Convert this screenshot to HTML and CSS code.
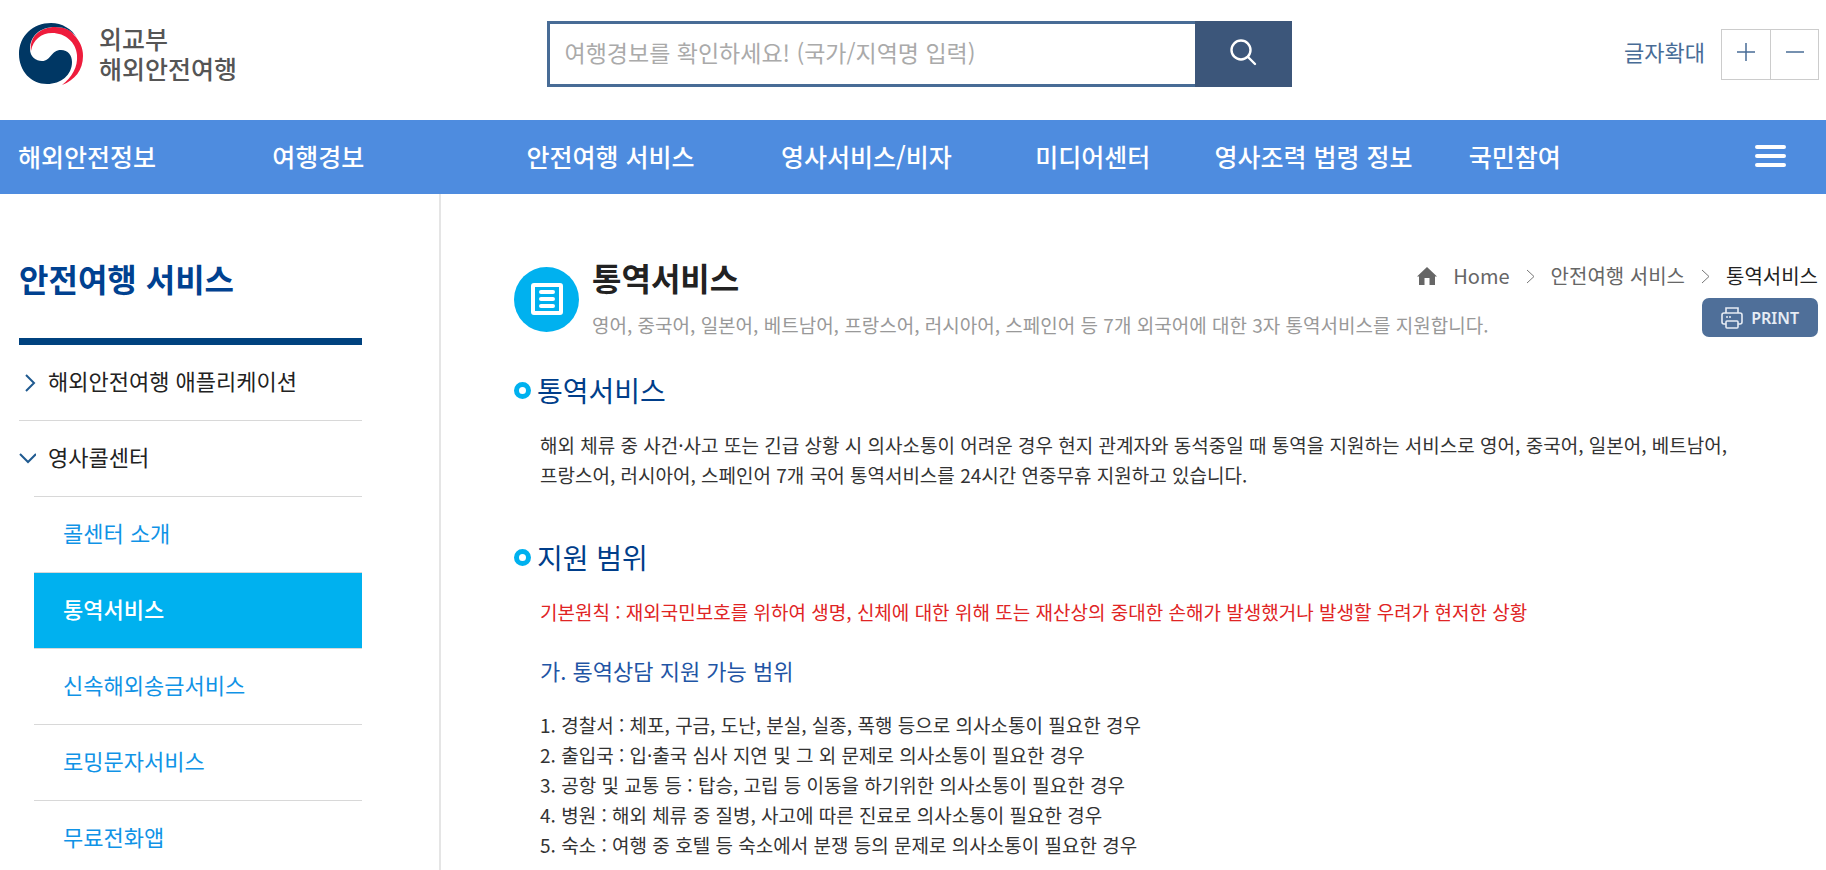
FILE: index.html
```html
<!DOCTYPE html>
<html lang="ko">
<head>
    <meta charset="UTF-8">
    <meta name="viewport" content="width=device-width, initial-scale=1.0">
    <title>통역서비스 | 외교부 해외안전여행</title>
    <link rel="stylesheet" href="styles.css">
</head>
<body>
    <header class="header">
        <a href="#" class="logo">
            <svg class="logo-mark" viewBox="0 0 64 62" aria-hidden="true">
                <path fill="#ee1c3c" d="M12 28C10 13 22 4 36 4C46 4 52 7 55 12C61 18 64 25 64 33C64 47 56 57 43 62C53 54 59 44 58 32C57 19 46 10 33 10C22 10 14 17 12 28Z"/>
                <path fill="#003764" d="M58 15C53 7 45 4 36 4C20 4 11 14 11 26C11 34 17 38 23 38C32 38 32 27 42 27C49 27 53 32 53 39C53 52 42 61 28 61C12 61 0 48 0 31C0 13 14 0 32 0C43 0 53 6 58 15Z"/>
            </svg>
            <span class="logo-text">외교부<br>해외안전여행</span>
        </a>
        <form class="search" action="#">
            <input type="text" class="search-input" aria-label="여행경보 검색" placeholder="여행경보를 확인하세요! (국가/지역명 입력)">
            <button type="submit" class="search-btn" aria-label="검색">
                <svg width="28" height="28" viewBox="0 0 28 28" fill="none" stroke="#fff" stroke-width="2.4" aria-hidden="true">
                    <circle cx="12" cy="12" r="9.5"/>
                    <path d="M19 19l7 7" stroke-linecap="round"/>
                </svg>
            </button>
        </form>
        <div class="font-size">
            <span>글자확대</span>
            <div class="font-btns">
                <button type="button" aria-label="글자 크게">
                    <svg width="18" height="18" viewBox="0 0 18 18" stroke="#486c96" stroke-width="1.5" aria-hidden="true"><path d="M0 9h18M9 0v18"/></svg>
                </button>
                <button type="button" aria-label="글자 작게">
                    <svg width="18" height="18" viewBox="0 0 18 18" stroke="#486c96" stroke-width="1.5" aria-hidden="true"><path d="M0 9h18"/></svg>
                </button>
            </div>
        </div>
    </header>

    <nav class="gnb">
        <ul class="gnb-list">
            <li><a href="#">해외안전정보</a></li>
            <li><a href="#">여행경보</a></li>
            <li><a href="#">안전여행 서비스</a></li>
            <li><a href="#">영사서비스/비자</a></li>
            <li><a href="#">미디어센터</a></li>
            <li><a href="#">영사조력 법령 정보</a></li>
            <li><a href="#">국민참여</a></li>
        </ul>
        <button type="button" class="gnb-all" aria-label="전체메뉴">
            <svg width="31" height="22" viewBox="0 0 31 22" stroke="#fff" stroke-width="4" stroke-linecap="round" aria-hidden="true"><path d="M2 2h27M2 11h27M2 20h27"/></svg>
        </button>
    </nav>

    <div class="container">
        <aside class="side">
            <h2 class="side-title">안전여행 서비스</h2>
            <ul class="lnb">
                <li>
                    <a href="#" class="lnb-link">
                        <svg width="17" height="18" viewBox="0 0 17 18" fill="none" stroke="#1f5a90" stroke-width="2" aria-hidden="true"><path d="M7 1l8 8-8 8"/></svg>
                        <span>해외안전여행 애플리케이션</span>
                    </a>
                </li>
                <li>
                    <a href="#" class="lnb-link">
                        <svg width="17" height="18" viewBox="0 0 17 18" fill="none" stroke="#1f5a90" stroke-width="2" aria-hidden="true"><path d="M1 4l8 8 8-8"/></svg>
                        <span>영사콜센터</span>
                    </a>
                    <ul class="lnb-sub">
                        <li><a href="#">콜센터 소개</a></li>
                        <li><a href="#" class="on">통역서비스</a></li>
                        <li><a href="#">신속해외송금서비스</a></li>
                        <li><a href="#">로밍문자서비스</a></li>
                        <li><a href="#">무료전화앱</a></li>
                    </ul>
                </li>
            </ul>
        </aside>

        <main class="content">
            <div class="page-head">
                <svg class="page-icon" viewBox="0 0 65 65" aria-hidden="true">
                    <circle cx="32.5" cy="32.5" r="32.5" fill="#00b1ef"/>
                    <rect x="19" y="18" width="28" height="28" rx="1" fill="none" stroke="#fff" stroke-width="4"/>
                    <path d="M27 25h12M27 32h12M27 39h12" stroke="#fff" stroke-width="4" stroke-linecap="round"/>
                </svg>
                <div class="page-titles">
                    <h1>통역서비스</h1>
                    <p>영어, 중국어, 일본어, 베트남어, 프랑스어, 러시아어, 스페인어 등 7개 외국어에 대한 3자 통역서비스를 지원합니다.</p>
                </div>
                <div class="page-util">
                    <div class="location">
                        <svg width="20" height="18" viewBox="0 0 20 18" fill="#666" aria-hidden="true"><path d="M10 0L20 9.5H18V18H12.5V11H7.500V18H2V9.500H0Z"/></svg>
                        <a href="#">Home</a>
                        <svg width="9" height="15" viewBox="0 0 9 15" fill="none" stroke="#777" aria-hidden="true"><path d="M1 1l7 6.5-7 6.5"/></svg>
                        <a href="#">안전여행 서비스</a>
                        <svg width="9" height="15" viewBox="0 0 9 15" fill="none" stroke="#777" aria-hidden="true"><path d="M1 1l7 6.5-7 6.5"/></svg>
                        <a href="#" class="current">통역서비스</a>
                    </div>
                    <button type="button" class="print">
                        <svg width="22" height="22" viewBox="0 0 22 22" fill="none" stroke="#e6ecf4" stroke-width="1.6" aria-hidden="true">
                            <path d="M5 6V1h12v5M5 17H3a2 2 0 0 1-2-2V8a2 2 0 0 1 2-2h16a2 2 0 0 1 2 2v7a2 2 0 0 1-2 2h-2"/>
                            <rect x="5" y="14" width="12" height="7" rx="1"/>
                            <path d="M5 10h2M8 10h2"/>
                        </svg>
                        PRINT
                    </button>
                </div>
            </div>

            <section class="section">
                <h3>통역서비스</h3>
                <p>해외 체류 중 사건·사고 또는 긴급 상황 시 의사소통이 어려운 경우 현지 관계자와 동석중일 때 통역을 지원하는 서비스로 영어, 중국어, 일본어, 베트남어, 프랑스어, 러시아어, 스페인어 7개 국어 통역서비스를 24시간 연중무휴 지원하고 있습니다.</p>
            </section>

            <section class="section">
                <h3>지원 범위</h3>
                <p class="notice">기본원칙 : 재외국민보호를 위하여 생명, 신체에 대한 위해 또는 재산상의 중대한 손해가 발생했거나 발생할 우려가 현저한 상황</p>
                <h4>가. 통역상담 지원 가능 범위</h4>
                <ul class="range">
                    <li>1. 경찰서 : 체포, 구금, 도난, 분실, 실종, 폭행 등으로 의사소통이 필요한 경우</li>
                    <li>2. 출입국 : 입·출국 심사 지연 및 그 외 문제로 의사소통이 필요한 경우</li>
                    <li>3. 공항 및 교통 등 : 탑승, 고립 등 이동을 하기위한 의사소통이 필요한 경우</li>
                    <li>4. 병원 : 해외 체류 중 질병, 사고에 따른 진료로 의사소통이 필요한 경우</li>
                    <li>5. 숙소 : 여행 중 호텔 등 숙소에서 분쟁 등의 문제로 의사소통이 필요한 경우</li>
                </ul>
            </section>
        </main>
    </div>
</body>
</html>
```
FILE: styles.css
```css
*,
*::before {
    box-sizing: border-box;
    margin: 0;
    padding: 0;
}

body {
    font-family: "Noto Sans CJK KR", sans-serif;
    font-size: 19px;
    line-height: 30px;
    color: #333;
    background: #fff;
    word-break: keep-all;
}

ul {
    list-style: none;
}

a {
    color: inherit;
    text-decoration: none;
}

button {
    border: 0;
    background: none;
    font-family: inherit;
    cursor: pointer;
}

svg {
    display: block;
    flex-shrink: 0;
}

/* header */
.header {
    display: grid;
    grid-template-columns: 1fr 745px 1fr;
    align-items: start;
    height: 120px;
    padding: 21px 7px 0 19px;
}

.logo {
    display: flex;
    gap: 16px;
    padding-top: 2px;
}

.logo-mark {
    width: 64px;
    height: 62px;
}

.logo-text {
    font-size: 25px;
    font-weight: 500;
    color: #555;
}

.search {
    display: flex;
    height: 66px;
}

.search-input {
    flex: 1;
    min-width: 0;
    padding: 0 15px 4px;
    border: 3px solid #486c96;
    border-right: 0;
    font-family: inherit;
    font-size: 23px;
    color: #333;
}

.search-input::placeholder {
    color: #aaa;
}

.search-btn {
    display: flex;
    align-items: center;
    justify-content: center;
    width: 97px;
    padding-bottom: 4px;
    background: #3c567a;
}

.font-size {
    display: flex;
    justify-content: flex-end;
    gap: 16px;
    padding-top: 8px;
    font-size: 22px;
    line-height: 44px;
    color: #486c96;
}

.font-btns {
    display: flex;
    border: 1px solid #ccc;
}

.font-btns button {
    display: flex;
    align-items: center;
    justify-content: center;
    width: 48px;
    height: 49px;
    padding-bottom: 5px;
}

.font-btns button + button {
    border-left: 1px solid #ccc;
}

/* main menu */
.gnb {
    display: flex;
    align-items: center;
    height: 74px;
    padding: 0 40px 2px 18px;
    background: #4e8cdf;
}

.gnb-list {
    flex: 1;
    display: grid;
    grid-template-columns: 254fr 254fr 254fr 254fr 179fr 254fr 286fr;
    font-size: 25px;
    font-weight: 500;
    color: #fff;
    white-space: nowrap;
}

/* layout */
.container {
    display: flex;
    min-height: calc(100vh - 194px);
}

.side {
    width: 441px;
    flex-shrink: 0;
    padding: 60px 77px 0 19px;
    border-right: 2px solid #e5e5e5;
}

.side-title {
    padding-bottom: 36px;
    border-bottom: 7px solid #00427f;
    font-size: 32px;
    line-height: 48px;
    color: #004190;
}

.lnb {
    font-size: 22px;
    color: #222;
}

.lnb-link {
    display: flex;
    align-items: center;
    gap: 12px;
    height: 76px;
    border-bottom: 1px solid #d8d8d8;
}

.lnb-link span {
    padding-bottom: 5px;
}

.lnb-sub {
    margin-top: -1px;
    padding-left: 15px;
    background: #fff;
    color: #1093e6;
}

.lnb-sub a {
    display: block;
    height: 76px;
    padding-left: 29px;
    border-top: 1px solid #d8d8d8;
    line-height: 70px;
}

.lnb-sub .on {
    background: #00b1ef;
    color: #fff;
    font-weight: 500;
}

/* content */
.content {
    flex: 1;
    min-width: 0;
    padding: 61px 8px 0 73px;
}

.page-head {
    display: flex;
    gap: 13px;
}

.page-icon {
    width: 65px;
    height: 65px;
    margin-top: 12px;
}

.page-titles {
    flex: 1;
    min-width: 0;
    color: #999;
    white-space: nowrap;
}

.page-titles h1 {
    font-size: 32px;
    line-height: 44px;
    color: #222;
}

.page-titles p {
    padding-top: 11px;
}

.page-util {
    display: flex;
    flex-direction: column;
    align-items: flex-end;
    gap: 7px;
    padding-top: 6px;
}

.location {
    display: flex;
    align-items: center;
    gap: 16px;
    font-size: 20px;
    color: #666;
}

.location .current {
    color: #222;
}

.print {
    display: flex;
    align-items: center;
    gap: 8px;
    height: 39px;
    padding: 0 19px;
    border-radius: 7px;
    background: #4f6f99;
    font-family: "Noto Sans", sans-serif;
    font-size: 16px;
    font-weight: 600;
    color: #e6ecf4;
}

.section {
    padding: 30px 0 17px;
}

.section h3 {
    display: flex;
    align-items: center;
    gap: 6px;
    font-size: 28px;
    font-weight: 400;
    line-height: 40px;
    color: #003e8a;
}

.section h3::before {
    content: "";
    width: 17px;
    height: 17px;
    border: 5px solid #00b1ef;
    border-radius: 50%;
}

.section p {
    padding: 20px 26px 0;
}

.section .notice {
    color: #e02424;
}

.section h4 {
    padding: 28px 26px 0;
    font-size: 22px;
    font-weight: 400;
    color: #1f55a5;
}

.range {
    padding: 25px 26px 0;
}
```
